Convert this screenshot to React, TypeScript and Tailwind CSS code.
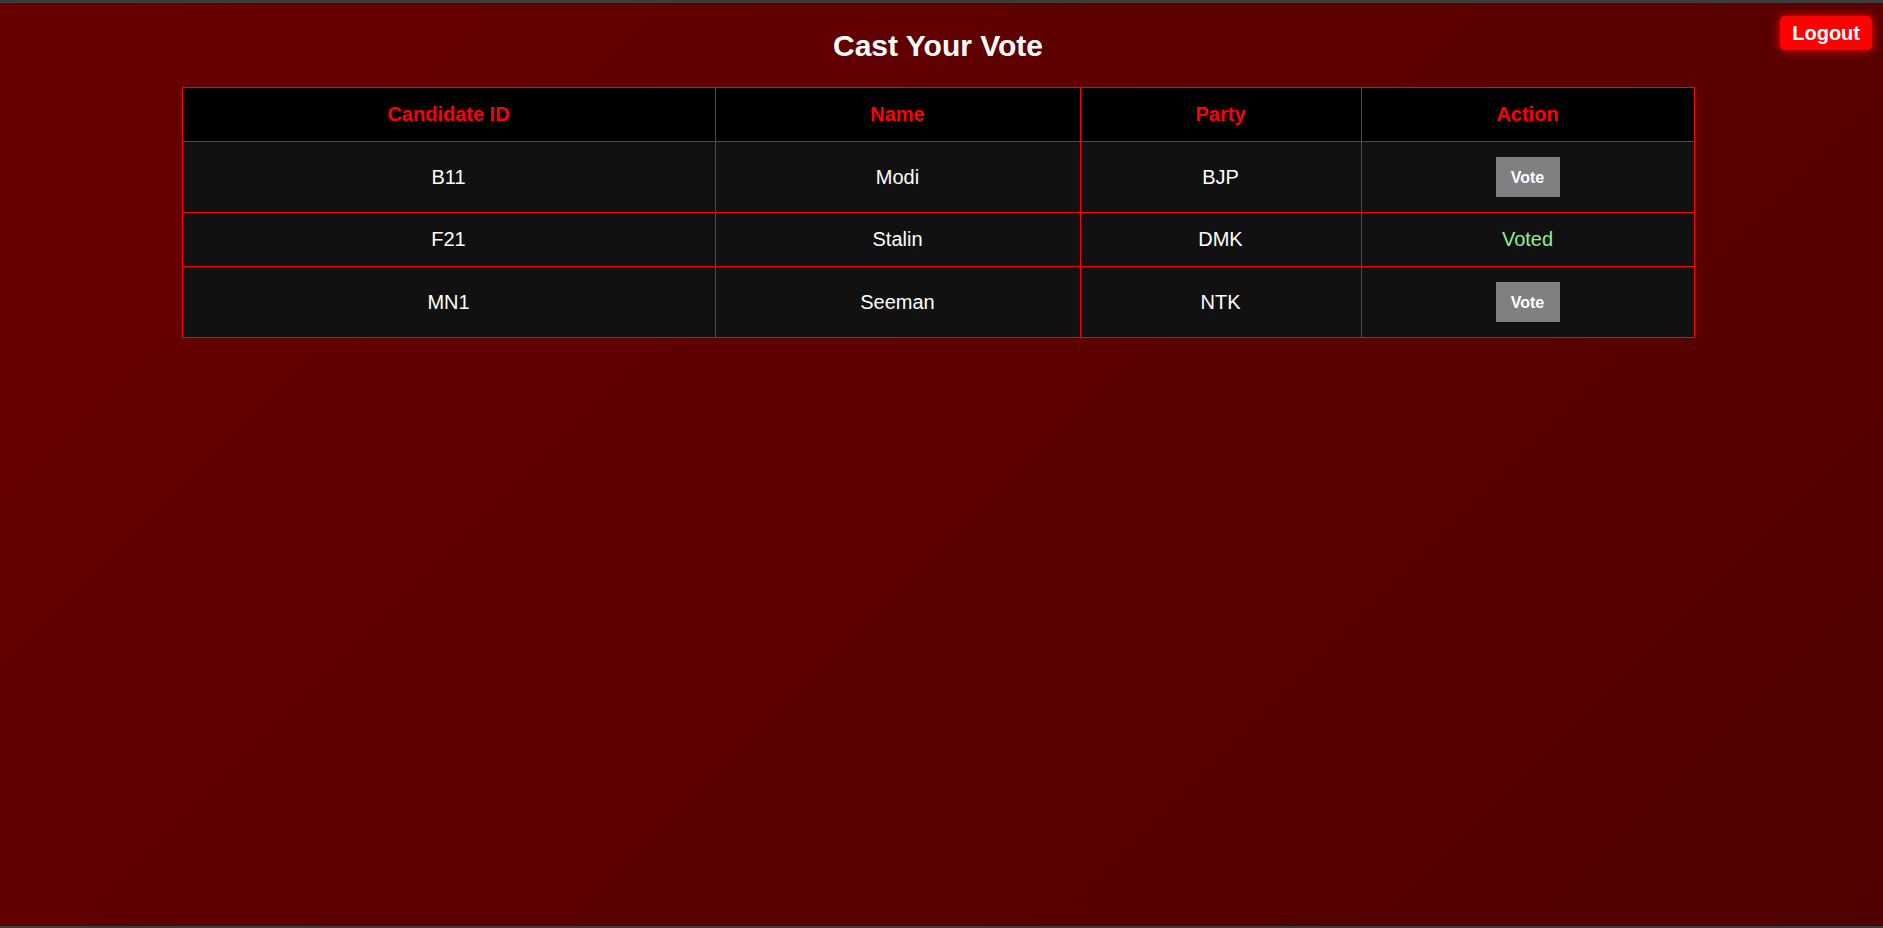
const candidates = [
  { id: "B11", name: "Modi", party: "BJP", voted: false },
  { id: "F21", name: "Stalin", party: "DMK", voted: true },
  { id: "MN1", name: "Seeman", party: "NTK", voted: false },
];

export default function App() {
  return (
    <div className="min-h-[928px] flex flex-col bg-[#3c3c3c] font-['Liberation_Sans',Arial,sans-serif]">
      <div className="h-[3px] bg-[#3c3c3c]" />
      <main className="relative flex-1 bg-[linear-gradient(135deg,#680000,#510000)] pr-[7px] pt-[26px]">
        <button className="absolute right-[11px] top-[13px] h-[34px] rounded-[5px] bg-[#ff0000] px-[12px] text-[20px] font-bold leading-[23px] text-white shadow-[0_0_10px_#ff0000]">
          Logout
        </button>
        <h1 className="text-center text-[30px] font-bold leading-[34px] text-white">
          Cast Your Vote
        </h1>
        <table className="mx-auto mt-[24px] w-[1512px] table-fixed border-collapse text-[20px] leading-[23px]">
          <colgroup>
            <col className="w-[533px]" />
            <col className="w-[365px]" />
            <col className="w-[281px]" />
            <col className="w-[333px]" />
          </colgroup>
          <thead>
            <tr className="bg-black">
              {["Candidate ID", "Name", "Party", "Action"].map((h) => (
                <th
                  key={h}
                  className="border border-[#ff0000] p-[15px] text-center font-bold text-[#ff0000]"
                >
                  {h}
                </th>
              ))}
            </tr>
          </thead>
          <tbody>
            {candidates.map((c) => (
              <tr key={c.id} className="bg-[#111111] text-white">
                <td className="border border-[#ff0000] p-[15px] text-center">{c.id}</td>
                <td className="border border-[#ff0000] p-[15px] text-center">{c.name}</td>
                <td className="border border-[#ff0000] p-[15px] text-center">{c.party}</td>
                <td className="border border-[#ff0000] p-[15px] text-center">
                  {c.voted ? (
                    <span className="text-[#90ee90]">Voted</span>
                  ) : (
                    <button className="h-[40px] w-[64px] bg-[#808080] text-[16px] font-bold text-white align-middle">
                      Vote
                    </button>
                  )}
                </td>
              </tr>
            ))}
          </tbody>
        </table>
      </main>
      <div className="h-[2px] bg-[#3c3c3c]" />
    </div>
  );
}
